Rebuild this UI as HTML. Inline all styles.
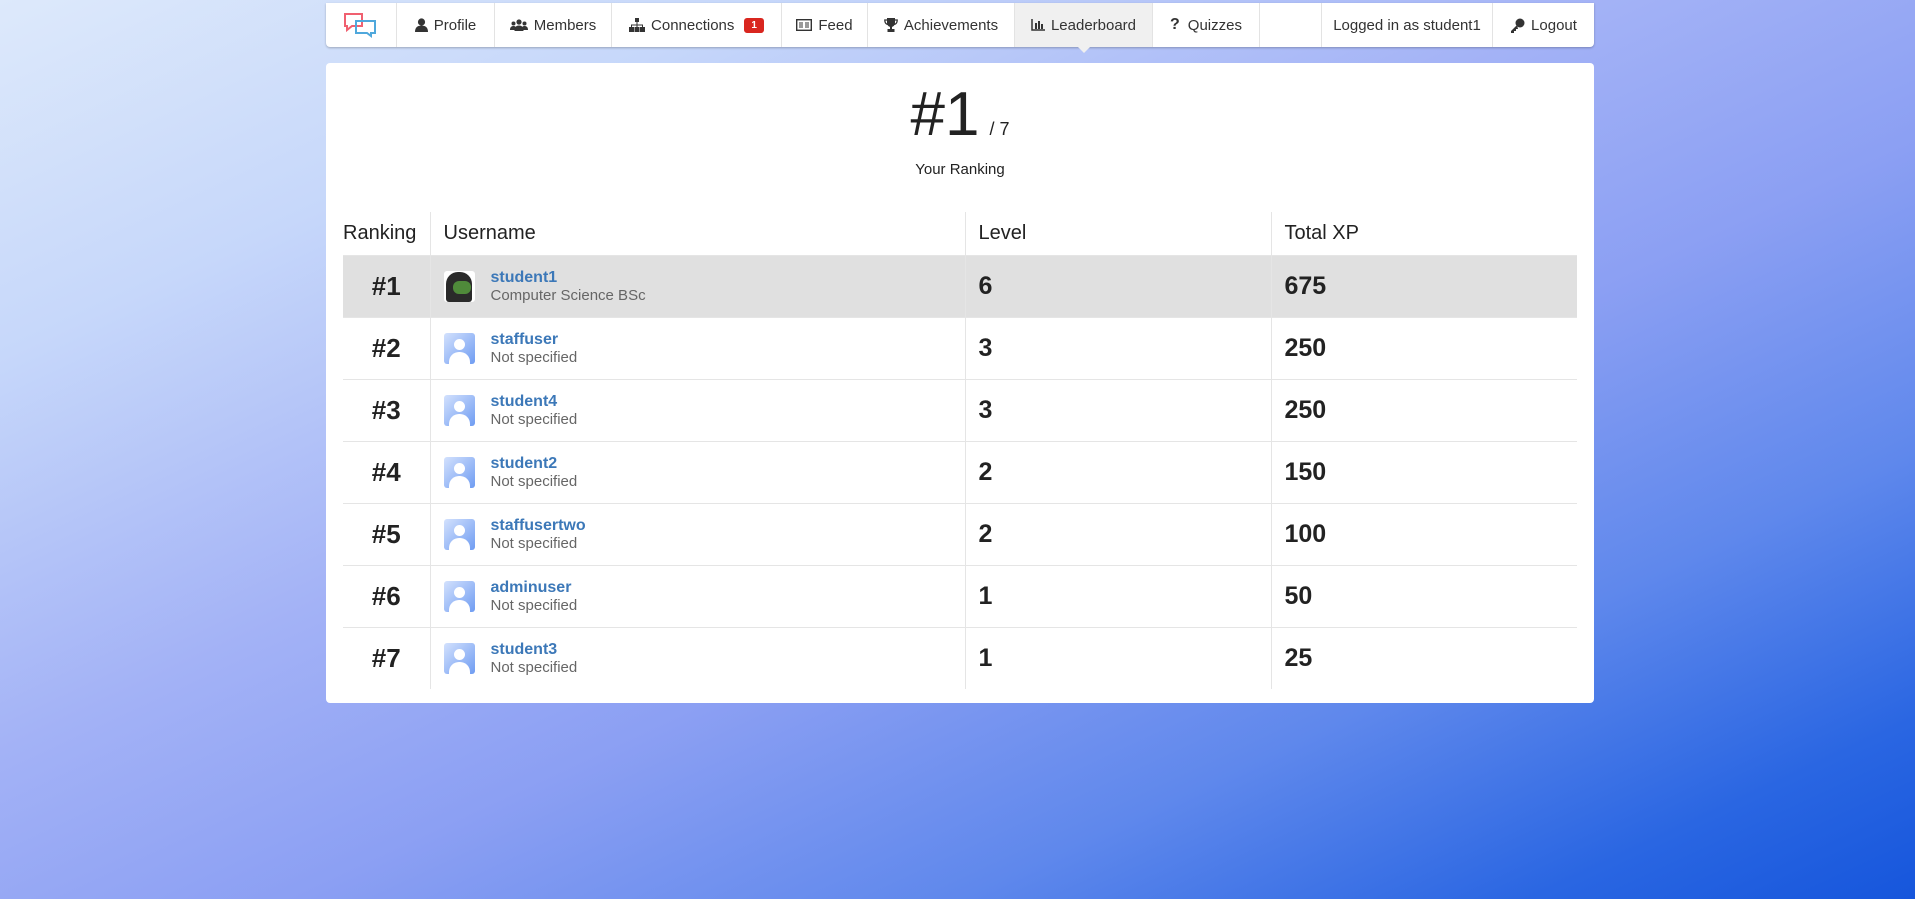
<!DOCTYPE html>
<html><head><meta charset="utf-8"><style>
*{box-sizing:border-box;margin:0;padding:0}
html,body{width:1915px;height:899px;overflow:hidden}
body{font-family:"Liberation Sans",sans-serif;color:#333;position:relative;
background:linear-gradient(155deg,#dde9fb 0%,#c6d7fa 20%,#a3b2f6 42%,#8b9ff3 58%,#5f88ec 75%,#2a66e2 90%,#1656dc 100%)}
.nav{position:absolute;left:326px;top:3px;width:1268px;height:44px;background:#fff;border-radius:0 0 4px 4px;box-shadow:0 1px 2px rgba(0,0,0,.25);display:flex;font-size:15px;color:#333}
.nav>div{height:44px;display:flex;align-items:center;justify-content:center;border-right:1px solid #e3e3e3;white-space:nowrap;flex:none}
.nav>div:last-child{border-right:0}
.nav svg{margin-right:6px}
.nav .act{background:#f0f0f0;position:relative}
.nav .act:after{content:"";position:absolute;bottom:-6px;left:50%;margin-left:-6px;border-left:6px solid transparent;border-right:6px solid transparent;border-top:6px solid #f0f0f0}
.badge{background:#d9261f;color:#fff;font-size:10px;font-weight:bold;border-radius:3px;padding:2px 7px;margin-left:10px}
.card{position:absolute;left:326px;top:63px;width:1268px;height:640px;background:#fff;border-radius:4px}
.big{position:absolute;left:0;width:100%;top:12px;text-align:center;font-size:62px;color:#222;line-height:80px}
.big small{font-size:18px;margin-left:10px}
.yr{position:absolute;left:0;width:100%;top:98px;text-align:center;font-size:15px;color:#222}
table{position:absolute;left:17px;top:149px;width:1234px;border-collapse:collapse;table-layout:fixed}
th{font-size:20px;font-weight:normal;text-align:left;height:43px;padding-left:13px;border-left:1px solid #e5e5e5;color:#222}
th:first-child{border-left:0;padding-left:0}
td{height:62px;border-left:1px solid #e5e5e5;border-top:1px solid #e5e5e5;padding-left:13px;font-size:25px;color:#222;font-weight:bold}
td:first-child{border-left:0;text-align:center;padding-left:0;font-size:26px}
tr.me td{background:#e0e0e0}
.u{display:flex;align-items:center}
.av{width:31px;height:31px;border-radius:3px;background:linear-gradient(135deg,#d3e1fd,#6f9cf2);position:relative;overflow:hidden;margin-right:16px;flex:none}
.av:before{content:"";position:absolute;left:10px;top:6px;width:11px;height:11px;border-radius:50%;background:#fff}
.av:after{content:"";position:absolute;left:5px;top:19px;width:21px;height:18px;border-radius:10px 10px 0 0;background:#fff}
.av.f{background:#fff}
.av.f:before{background:#2a2a2a;left:2px;top:1px;width:26px;height:30px;border-radius:12px 12px 3px 3px}
.av.f:after{background:#4f8a3a;top:10px;left:9px;width:18px;height:13px;border-radius:6px}
.n{font-weight:normal}
.n a{color:#3c78b8;font-size:16px;text-decoration:none;font-weight:bold;display:block;line-height:19px}
.n span{color:#666;font-size:15px;line-height:18px;display:block}
</style></head><body>
<div class="nav">
<div style="width:71px"><svg width="36" height="26" viewBox="0 0 36 26" style="margin:0"><path d="M2 2h17v12H9l-5 4v-4H2z" fill="none" stroke="#f06070" stroke-width="2"/><path d="M13 9h19v12h-4v3l-4-3H13z" fill="none" stroke="#4fa8dc" stroke-width="2"/></svg></div>
<div style="width:98px"><svg width="13" height="14" viewBox="0 0 13 14"><circle cx="6.5" cy="4" r="3.6" fill="#333"/><path d="M0 14c0-5 3-6.5 6.5-6.5S13 9 13 14z" fill="#333"/></svg>Profile</div>
<div style="width:117px"><svg width="18" height="12" viewBox="0 0 18 12"><circle cx="9" cy="3" r="2.6" fill="#333"/><circle cx="3.5" cy="4.5" r="2" fill="#333"/><circle cx="14.5" cy="4.5" r="2" fill="#333"/><path d="M4.5 12c0-4 2-5.5 4.5-5.5s4.5 1.5 4.5 5.5zM0 11c0-3 1.5-4 3.5-4s3 1 3 4zM11.5 11c0-3 1-4 3-4s3.5 1 3.5 4z" fill="#333"/></svg>Members</div>
<div style="width:170px"><svg width="16" height="14" viewBox="0 0 16 14"><rect x="6" y="0" width="4" height="4" fill="#333"/><path d="M8 4v3M2.5 9V7h11v2M8 7v2" stroke="#333" fill="none"/><rect x="0" y="9" width="5" height="5" fill="#333"/><rect x="5.5" y="9" width="5" height="5" fill="#333"/><rect x="11" y="9" width="5" height="5" fill="#333"/></svg>Connections<span class="badge">1</span></div>
<div style="width:86px"><svg width="16" height="12" viewBox="0 0 16 12"><rect x=".7" y=".7" width="14.6" height="10.6" fill="none" stroke="#333" stroke-width="1.4"/><path d="M3 4h4M3 6h4M3 8h4M9 4h4M9 6h4M9 8h4" stroke="#333"/></svg>Feed</div>
<div style="width:147px"><svg width="14" height="14" viewBox="0 0 14 14"><path d="M3 0h8v5a4 4 0 0 1-8 0z" fill="#333"/><path d="M3 2H0.8c0 3 1 4 3 4.5M11 2h2.2c0 3-1 4-3 4.5" stroke="#333" fill="none" stroke-width="1.3"/><rect x="6" y="8" width="2" height="3" fill="#333"/><rect x="3.5" y="11" width="7" height="3" fill="#333"/></svg>Achievements</div>
<div class="act" style="width:138px"><svg width="14" height="12" viewBox="0 0 14 12"><path d="M1 0v11h13" stroke="#333" fill="none" stroke-width="1.5"/><rect x="4" y="4" width="2" height="6" fill="#333"/><rect x="7" y="2" width="2" height="8" fill="#333"/><rect x="10" y="5" width="2" height="5" fill="#333"/></svg>Leaderboard</div>
<div style="width:107px"><b style="font-size:16px;margin-right:8px">?</b>Quizzes</div>
<div style="width:62px"></div>
<div style="width:171px">Logged in as student1</div>
<div style="width:101px"><svg width="15" height="15" viewBox="0 0 15 15"><circle cx="10" cy="5" r="4.5" fill="#333"/><path d="M7 7L1 13v2h3v-2h2v-2h2z" fill="#333"/></svg>Logout</div>
</div>

<div class="card">
<div class="big">#1<small>/ 7</small></div>
<div class="yr">Your Ranking</div>
<table>
<colgroup><col style="width:87px"><col style="width:535px"><col style="width:306px"><col></colgroup>
<tr><th>Ranking</th><th>Username</th><th>Level</th><th>Total XP</th></tr>
<tr class="me"><td>#1</td><td><div class="u"><div class="av f"></div><div class="n"><a>student1</a><span>Computer Science BSc</span></div></div></td><td>6</td><td>675</td></tr>
<tr><td>#2</td><td><div class="u"><div class="av"></div><div class="n"><a>staffuser</a><span>Not specified</span></div></div></td><td>3</td><td>250</td></tr>
<tr><td>#3</td><td><div class="u"><div class="av"></div><div class="n"><a>student4</a><span>Not specified</span></div></div></td><td>3</td><td>250</td></tr>
<tr><td>#4</td><td><div class="u"><div class="av"></div><div class="n"><a>student2</a><span>Not specified</span></div></div></td><td>2</td><td>150</td></tr>
<tr><td>#5</td><td><div class="u"><div class="av"></div><div class="n"><a>staffusertwo</a><span>Not specified</span></div></div></td><td>2</td><td>100</td></tr>
<tr><td>#6</td><td><div class="u"><div class="av"></div><div class="n"><a>adminuser</a><span>Not specified</span></div></div></td><td>1</td><td>50</td></tr>
<tr><td>#7</td><td><div class="u"><div class="av"></div><div class="n"><a>student3</a><span>Not specified</span></div></div></td><td>1</td><td>25</td></tr>
</table>
</div>
</body></html>
